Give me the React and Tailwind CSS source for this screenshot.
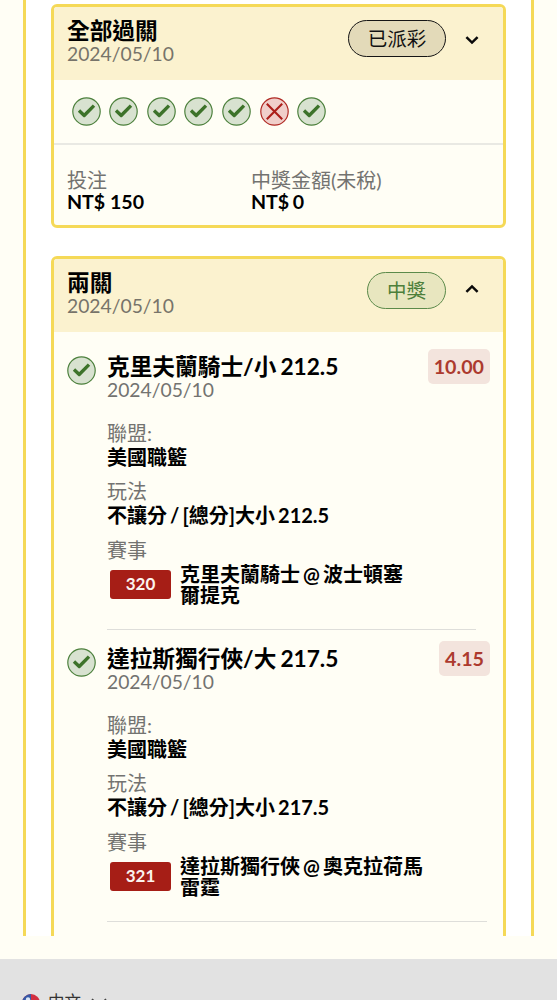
import clsx from "clsx";

const results = ["win", "win", "win", "win", "win", "lose", "win"];

const legs = [
    {
        id: "320",
        title: "克里夫蘭騎士/小 212.5",
        date: "2024/05/10",
        odds: "10.00",
        league: "美國職籃",
        play: "不讓分 / [總分]大小 212.5",
        match: ["克里夫蘭騎士 @ 波士頓塞", "爾提克"],
        lineClass: "mr-[27px]"
    },
    {
        id: "321",
        title: "達拉斯獨行俠/大 217.5",
        date: "2024/05/10",
        odds: "4.15",
        league: "美國職籃",
        play: "不讓分 / [總分]大小 217.5",
        match: ["達拉斯獨行俠 @ 奧克拉荷馬", "雷霆"],
        lineClass: "mr-[16px]"
    }
];

const ResultIcon = ({ type }) => (
    <svg viewBox="0 0 29 29" className="block h-[29px] w-[29px] shrink-0" fill="none">
        {type === "win" ? (
            <>
                <circle cx="14.5" cy="14.5" r="13.7" fill="#d8e2d0" stroke="#4d813d" strokeWidth="1.2" />
                <path d="M7 13.6l5.2 4.9L22 8.6" stroke="#3d732a" strokeWidth="3.4" strokeLinejoin="round" />
            </>
        ) : (
            <>
                <circle cx="14.5" cy="14.5" r="13.7" fill="#f0cfca" stroke="#b02a24" strokeWidth="1.2" />
                <path d="M6.8 6.8l15.4 15.4M22.2 6.8L6.8 22.2" stroke="#ac1f1a" strokeWidth="2.1" />
            </>
        )}
    </svg>
);

const Chevron = ({ open }) => (
    <svg viewBox="0 0 14 10" className={clsx("h-[10px] w-[14px]", open ? "mb-[3px]" : "mt-[2px]")} fill="none" stroke="#0a0a0a" strokeWidth="2.5">
        <path d={open ? "M1.4 7.8L7 2.4l5.6 5.4" : "M1.4 2.2L7 7.6l5.6-5.4"} />
    </svg>
);

const CardHeader = ({ title, date, status, won, open }) => (
    <div className="flex h-[73px] justify-between bg-[#fbf2cf] pt-[12px] pr-[24.5px] pl-[13px]">
        <div>
            <div className="text-[22.7px] leading-[24px] font-bold text-black">{title}</div>
            <div className="text-[19.3px] leading-[22px] text-[#77746a]">{date}</div>
        </div>
        <div className="mt-px flex h-[37px] items-center gap-[18.5px]">
            <span
                className={clsx(
                    "flex h-[37px] items-center justify-center rounded-full border-[1.5px] text-[19.5px]",
                    won ? "w-[79px] border-[#5b8a4a] bg-[#e8e6bf] text-[#4d7f3b]" : "w-[98px] border-[#151515] bg-[#e3dab9] text-[#111]"
                )}
            >
                {status}
            </span>
            <Chevron open={open} />
        </div>
    </div>
);

const Field = ({ label, children }) => (
    <div className="mb-[9.3px]">
        <div className="text-[20px] leading-[24px] text-[#737370]">{label}</div>
        <div className="text-[20px] leading-[25px] font-bold text-black [word-spacing:-1.8px]">{children}</div>
    </div>
);

const Leg = ({ leg }) => (
    <div className="flex h-[292px] pt-[22px] pl-[13px]">
        <div className="w-[40px] shrink-0 pt-[2px]">
            <ResultIcon type="win" />
        </div>
        <div className="min-w-0 flex-1">
            <div className="flex h-[67px] justify-between pr-[13px]">
                <div className="pt-px">
                    <div className="text-[22.7px] leading-[24px] font-bold whitespace-nowrap text-black [word-spacing:-1.5px]">{leg.title}</div>
                    <div className="text-[19.3px] leading-[22px] text-[#737370]">{leg.date}</div>
                </div>
                <span className="-mt-[5px] flex h-[35px] items-center rounded-[5px] bg-[#f3e4dd] px-[6px] text-[19.7px] font-bold text-[#ac3a2e]">
                    {leg.odds}
                </span>
            </div>
            <Field label="聯盟:">{leg.league}</Field>
            <Field label="玩法">{leg.play}</Field>
            <div className="text-[20px] leading-[24px] text-[#737370]">賽事</div>
            <div className="flex h-[67px] pt-[2px] pl-[3px]">
                <span className="mt-[6px] mr-[9px] flex h-[29px] w-[61px] items-center justify-center rounded-[3px] bg-[#a61e16] text-[17px] font-bold text-[#fbf3ee]">
                    {leg.id}
                </span>
                <div className="text-[20px] leading-[21px] font-bold whitespace-nowrap text-black [word-spacing:-1.8px]">
                    {leg.match.map(line => (
                        <div key={line}>{line}</div>
                    ))}
                </div>
            </div>
            <div className={clsx("h-px bg-[#dededa]", leg.lineClass)} />
        </div>
    </div>
);

const Flag = () => (
    <svg viewBox="0 0 18 18" className="h-[18px] w-[18px]">
        <circle cx="9" cy="9" r="9" fill="#d22f40" />
        <path d="M9 0A9 9 0 0 0 0 9h9z" fill="#3559a8" />
        <circle cx="6" cy="5.5" r="2.2" fill="#dbe6f5" />
    </svg>
);

const App = () => {
    return (
        <div className="h-[1000px] w-[557px] overflow-hidden bg-[#fffef5] font-['Lato','Noto_Sans_CJK_TC',sans-serif]">
            <main className="ml-[23px] h-[936px] w-[511px] overflow-hidden border-x-3 border-[#f5d957] bg-white px-[25px] pt-[4px]">
                <section className="h-[224px] overflow-hidden rounded-[6px] border-3 border-[#f5d957] bg-[#fffef5]">
                    <CardHeader title="全部過關" date="2024/05/10" status="已派彩" />
                    <div className="flex h-[63px] items-center gap-[8.65px] pl-[17.5px]">
                        {results.map((type, i) => (
                            <ResultIcon key={i} type={type} />
                        ))}
                    </div>
                    <div className="flex border-t-2 border-[#e9e9e3] pt-[25px] pl-[13px] text-[20px] leading-[21px]">
                        <div className="w-[184px]">
                            <div className="text-[#737370]">投注</div>
                            <div className="text-[19.6px] font-bold text-black">NT$ 150</div>
                        </div>
                        <div>
                            <div className="text-[#737370]">中獎金額(未稅)</div>
                            <div className="text-[19.6px] font-bold text-black [word-spacing:-1.2px]">NT$ 0</div>
                        </div>
                    </div>
                </section>

                <section className="mt-[28px] h-[720px] overflow-hidden rounded-[6px] border-3 border-[#f5d957] bg-[#fffef5]">
                    <CardHeader title="兩關" date="2024/05/10" status="中獎" won open />
                    {legs.map(leg => (
                        <Leg key={leg.id} leg={leg} />
                    ))}
                </section>
            </main>

            <footer className="mt-[23px] flex h-[90px] bg-[#e2e2e2] pt-[35px] pl-[22px] text-[16.5px] leading-[20px] text-[#333]">
                <Flag />
                <span className="-mt-[2px] ml-[8px]">中文</span>
                <svg viewBox="0 0 16 10" className="mt-[4px] ml-[10px] h-[10px] w-[16px]" fill="none" stroke="#444" strokeWidth="1.6">
                    <path d="M1 1l7 7 7-7" />
                </svg>
            </footer>
        </div>
    );
};

export default App;
